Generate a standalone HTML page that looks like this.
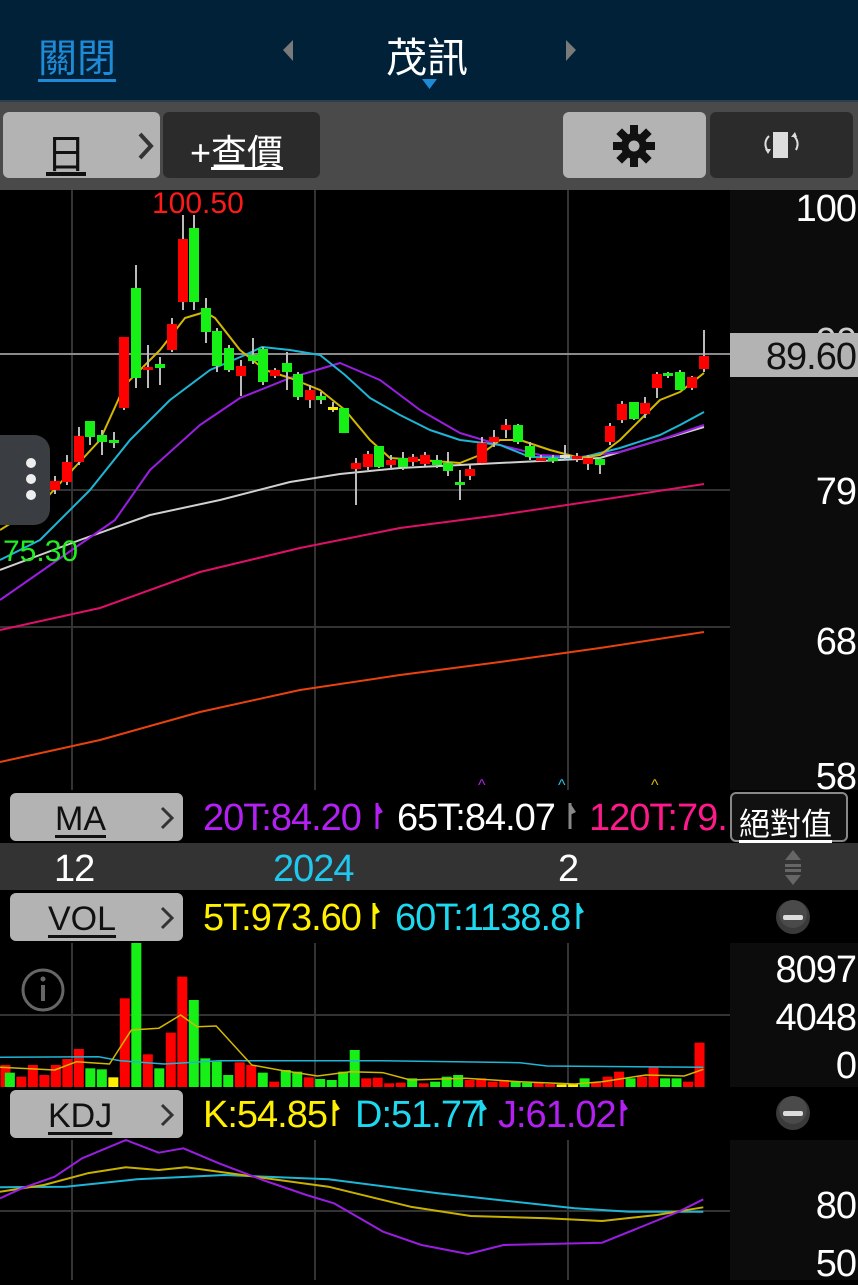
<!DOCTYPE html>
<html><head><meta charset="utf-8">
<style>
*{margin:0;padding:0;box-sizing:border-box}
body{width:858px;height:1280px;background:#000;overflow:hidden;position:relative;font-family:"Liberation Sans","Noto Sans CJK TC",sans-serif;color:#fff}
.abs{position:absolute}
.hdr{left:0;top:0;width:858px;height:100px;background:#012139}
.tb{left:0;top:100px;width:858px;height:90px;background:#4a4a4a;border-top:2px solid #2c3e4c}
.btn{position:absolute;border-radius:6px}
.lt{background:#b3b3b3}
.dk{background:#2b2b2b}
.lab{position:absolute;font-size:38px;white-space:nowrap;line-height:1;letter-spacing:-1px}
.ax{position:absolute;right:2px;font-size:38px;line-height:1;color:#fff;letter-spacing:-1px}
.gbtn{position:absolute;left:10px;width:173px;height:48px;background:#b3b3b3;border-radius:6px}
.gbtn span{position:absolute;left:45px;top:7px;font-size:34px;color:#111;text-decoration:underline;text-underline-offset:5px}
.gbtn svg{position:absolute;right:8px;top:13px}
</style></head><body>
<div class="abs hdr"></div>
<div class="abs" style="left:38px;top:28px;font-size:39px;color:#1f8bd6;text-decoration:underline;text-underline-offset:7px">關閉</div>
<div class="abs" style="left:386px;top:24px;font-size:41px;color:#fff">茂訊</div>
<svg class="abs" style="left:0;top:0" width="858" height="100">
<polygon points="293,40 293,61 283,50" fill="#7a7a7a"/>
<polygon points="566,40 566,61 576,50" fill="#7a7a7a"/>
<polygon points="422,79 437,79 429.5,89" fill="#1f8bd6"/>
</svg>
<div class="abs tb"></div>
<div class="btn lt" style="left:3px;top:112px;width:157px;height:66px"></div>
<div class="abs" style="left:46px;top:122px;font-size:40px;color:#111;text-decoration:underline;text-underline-offset:4px">日</div>
<svg class="abs" style="left:136px;top:131px" width="20" height="30"><polyline points="4,3 15,15 4,27" fill="none" stroke="#333" stroke-width="4"/></svg>
<div class="btn dk" style="left:163px;top:112px;width:157px;height:66px"></div>
<div class="abs" style="left:190px;top:124px;font-size:36px;color:#fff">+<span style="text-decoration:underline">查價</span></div>
<div class="btn lt" style="left:563px;top:112px;width:143px;height:66px"></div>
<svg class="abs" style="left:612px;top:124px" width="44" height="44" viewBox="-22 -22 44 44">
<g fill="#111"><circle r="13"/>
<g id="t"><rect x="-4" y="-21" width="8" height="10"/></g>
<use href="#t" transform="rotate(45)"/><use href="#t" transform="rotate(90)"/><use href="#t" transform="rotate(135)"/><use href="#t" transform="rotate(180)"/><use href="#t" transform="rotate(225)"/><use href="#t" transform="rotate(270)"/><use href="#t" transform="rotate(315)"/></g>
<circle r="5.5" fill="#b3b3b3"/></svg>
<div class="btn dk" style="left:710px;top:112px;width:143px;height:66px"></div>
<svg class="abs" style="left:760px;top:128px" width="44" height="34">
<rect x="13" y="4" width="15" height="26" fill="#ddd"/>
<path d="M9 8 Q3 14 7 22 M34 8 Q40 14 36 22" stroke="#ddd" stroke-width="2" fill="none"/>
<polygon points="5,21 11,21 8,26" fill="#ddd"/><polygon points="31,9 37,9 35,4" fill="#ddd"/>
</svg>

<svg id="main" class="abs" style="left:0;top:0" width="858" height="1280"></svg>

<div class="ax" style="top:190px">100</div>
<div class="ax" style="top:323px;color:#ccc">90</div>
<div class="abs" style="left:730px;top:333px;width:128px;height:44px;background:#b3b3b3"></div>
<div class="ax" style="top:338px;color:#111">89.60</div>
<div class="ax" style="top:473px">79</div>
<div class="ax" style="top:623px">68</div>
<div class="ax" style="top:758px">58</div>
<div class="abs" style="left:152px;top:187px;font-size:30px;color:#ff1a1a">100.50</div>
<div class="abs" style="left:3px;top:535px;font-size:30px;color:#22ee22">75.30</div>

<div class="abs" style="left:0;top:435px;width:50px;height:90px;background:#3a3e42;border-radius:0 16px 16px 0"></div>
<svg class="abs" style="left:20px;top:455px" width="24" height="50"><circle cx="11" cy="8" r="5" fill="#eee"/><circle cx="11" cy="24" r="5" fill="#eee"/><circle cx="11" cy="40" r="5" fill="#eee"/></svg>

<!-- MA row -->
<div class="gbtn" style="top:793px"><span style="left:45px">MA</span><svg width="16" height="24"><polyline points="3,2 13,12 3,22" fill="none" stroke="#333" stroke-width="3"/></svg></div>
<div class="lab" style="left:203px;top:799px;color:#b321f2">20T:84.20</div>
<div class="lab" style="left:397px;top:799px;color:#fff">65T:84.07</div>
<div class="lab" style="left:589px;top:799px;color:#ff1a8c;width:141px;overflow:hidden">120T:79.</div>
<div class="abs" style="left:730px;top:792px;width:118px;height:50px;border:2px solid #888;border-radius:6px;background:#111"></div>
<div class="abs" style="left:739px;top:799px;font-size:31px;text-decoration:underline;text-underline-offset:5px">絕對值</div>
<!-- date row -->
<div class="abs" style="left:0;top:843px;width:858px;height:47px;background:#333"></div>
<div class="lab" style="left:54px;top:850px">12</div>
<div class="lab" style="left:273px;top:850px;color:#1ec8ef">2024</div>
<div class="lab" style="left:558px;top:850px">2</div>
<svg class="abs" style="left:783px;top:850px" width="20" height="36"><polygon points="10,0 18,10 2,10" fill="#666"/><rect x="2" y="14" width="16" height="3" fill="#666"/><rect x="2" y="19" width="16" height="3" fill="#666"/><polygon points="10,35 18,25 2,25" fill="#666"/></svg>
<!-- VOL row -->
<div class="gbtn" style="top:893px"><span style="left:38px">VOL</span><svg width="16" height="24"><polyline points="3,2 13,12 3,22" fill="none" stroke="#333" stroke-width="3"/></svg></div>
<div class="lab" style="left:203px;top:899px;color:#ffef00">5T:973.60</div>
<div class="lab" style="left:395px;top:899px;color:#1ed8f0">60T:1138.8</div>
<div class="ax" style="top:951px">8097</div>
<div class="ax" style="top:999px">4048</div>
<div class="ax" style="top:1047px">0</div>
<!-- KDJ row -->
<div class="gbtn" style="top:1090px"><span style="left:38px">KDJ</span><svg width="16" height="24"><polyline points="3,2 13,12 3,22" fill="none" stroke="#333" stroke-width="3"/></svg></div>
<div class="lab" style="left:203px;top:1096px;color:#ffef00">K:54.85</div>
<div class="lab" style="left:355px;top:1096px;color:#1ed8f0">D:51.77</div>
<div class="lab" style="left:498px;top:1096px;color:#b321f2">J:61.02</div>
<div class="ax" style="top:1187px">80</div>
<div class="ax" style="top:1245px">50</div>

<script>
const S=document.getElementById('main');let h='';
const ln=(x1,y1,x2,y2,c,w)=>h+=`<line x1="${x1}" y1="${y1}" x2="${x2}" y2="${y2}" stroke="${c}" stroke-width="${w||1.5}"/>`;
const rc=(x,y,w,hh,c)=>h+=`<rect x="${x}" y="${y}" width="${w}" height="${hh}" fill="${c}"/>`;
const pl=(pts,c,w)=>h+=`<polyline points="${pts.map(p=>p.join(',')).join(' ')}" fill="none" stroke="${c}" stroke-width="${w||2}" stroke-linejoin="round"/>`;
rc(0,190,858,600,'#000');rc(730,190,128,600,'#0c0c0c');
rc(0,943,858,144,'#000');rc(730,943,128,144,'#0c0c0c');
rc(0,1140,858,140,'#000');rc(730,1140,128,140,'#0c0c0c');
for(const x of [72,315,568]){ln(x,190,x,790,'#333',2);ln(x,943,x,1087,'#333',2);ln(x,1140,x,1280,'#333',2);}
for(const y of [490,627]) ln(0,y,730,y,'#333',2);
ln(0,1015,730,1015,'#333',2);ln(0,1211,730,1211,'#333',2);
ln(0,354,730,354,'#8a8a8a',2);
pl([[0,762],[100,740],[200,712],[300,690],[400,675],[500,662],[600,648],[704,632]],'#e8420e');
pl([[0,630],[100,608],[200,572],[300,548],[400,528],[500,515],[600,500],[704,484]],'#e0106a');
pl([[0,570],[80,540],[150,515],[220,500],[290,482],[340,474],[400,468],[460,465],[560,460],[600,458],[660,440],[704,427]],'#d0d0d0');
pl([[0,600],[115,520],[150,470],[200,425],[240,398],[290,378],[340,363],[380,380],[420,410],[460,433],[500,445],[540,455],[580,457],[620,452],[660,440],[704,425]],'#9a1ee0');
pl([[0,560],[40,540],[90,490],[130,440],[170,400],[210,370],[245,355],[262,347],[290,350],[320,355],[345,375],[370,398],[400,415],[430,430],[460,440],[500,445],[530,457],[580,458],[620,448],[660,435],[680,425],[704,412]],'#1eb6d6');
pl([[0,530],[40,505],[100,440],[125,385],[160,350],[185,318],[205,312],[215,318],[240,350],[265,370],[290,378],[320,390],[345,410],[370,440],[390,458],[420,460],[460,463],[480,455],[500,440],[520,440],[550,450],[580,458],[600,455],[620,440],[640,420],[660,400],[680,392],[704,373]],'#d4b800');
const R='#ff0000',G='#17f017',Y='#ffee00';
const C=[[10,498,520,494,522,G],[21,504,507,500,512,R],[31,490,495,486,500,G],[43,489,495,486,498,R],[55,481,490,476,494,R],[67,462,482,455,485,R],[79,436,462,427,465,R],[90,421,437,421,445,G],[102,435,442,430,455,G],[114,440,443,432,448,G],[124,337,408,337,410,R],[136,288,378,265,388,G],[148,367,369,345,388,R],[160,364,368,357,385,G],[172,324,350,318,352,R],[183,239,302,215,310,R],[194,228,302,215,310,G],[206,308,332,298,343,G],[217,331,366,328,372,G],[229,348,370,345,372,G],[241,366,376,360,396,R],[253,355,361,338,364,G],[263,349,382,347,385,G],[275,370,376,368,378,R],[287,363,372,352,390,G],[298,374,397,372,400,G],[310,390,400,385,408,R],[321,396,400,392,404,G],[333,407,409,402,412,Y],[344,408,433,408,433,G],[356,463,469,458,505,R],[368,454,467,451,470,R],[379,446,467,446,468,G],[391,460,465,455,470,R],[403,458,467,452,470,G],[413,457,462,454,466,R],[425,455,464,452,466,R],[437,460,465,455,468,G],[448,463,471,452,476,G],[460,482,485,470,500,G],[470,469,476,465,480,R],[482,443,463,437,465,R],[494,437,442,430,447,R],[506,425,430,419,438,R],[518,425,442,424,444,G],[530,446,457,442,460,G],[541,458,460,455,462,R],[553,458,461,455,463,G],[565,455,457,445,460,'#ddd'],[577,456,459,453,462,R],[588,458,464,455,470,R],[600,459,465,457,474,G],[610,426,442,423,445,R],[622,404,420,401,423,R],[634,402,419,402,420,G],[645,403,414,397,418,R],[657,374,388,372,398,R],[668,373,375,372,378,G],[680,372,390,370,390,G],[692,377,388,376,390,R],[704,356,369,330,372,R]];
for(const [x,t,b,wt,wb,c] of C){ln(x,wt,x,wb,'#bbb',2);rc(x-5,t,10,Math.max(b-t,3),c);}
h+=`<text x="478" y="790" fill="#b321f2" font-size="16">^</text><text x="558" y="790" fill="#1ec8ef" font-size="16">^</text><text x="651" y="790" fill="#d4b800" font-size="16">^</text>`;
// little flag markers after values
const fl=(x,y,c)=>h+=`<line x1="${x}" y1="${y}" x2="${x}" y2="${y+26}" stroke="${c}" stroke-width="3"/><polygon points="${x},${y} ${x+6},${y+9} ${x},${y+12}" fill="${c}"/>`;
fl(377,803,'#b321f2');fl(570,803,'#888');fl(374,903,'#ffef00');fl(578,903,'#1ed8f0');fl(334,1100,'#ffef00');fl(481,1100,'#1ed8f0');fl(622,1100,'#b321f2');
const V=[[0,375,R],[8,398,G],[29,410,R],[50,375,R],[71,405,R],[92,375,R],[113,357,R],[134,327,R],[155,385,G],[176,388,G],[197,412,Y],[218,175,R],[239,0,G],[260,343,R],[281,385,G],[302,278,R],[323,110,R],[344,180,G],[365,355,G],[386,365,G],[407,405,G],[428,367,R],[449,375,R],[470,398,G],[491,425,R],[512,390,G],[533,395,G],[554,412,R],[575,417,G],[596,420,G],[617,395,G],[638,330,G],[659,415,R],[680,413,R],[701,430,R],[722,428,R],[743,415,G],[764,430,R],[785,425,G],[806,410,G],[827,405,G],[848,420,R],[869,415,R],[890,425,R],[911,420,R],[932,423,G],[953,428,G],[974,428,R],[995,432,R],[1016,433,Y],[1037,433,Y],[1058,415,G],[1079,428,R],[1100,410,R],[1121,395,R],[1142,415,G],[1163,410,R],[1184,380,R],[1205,415,G],[1226,415,G],[1247,425,R],[1268,308,R]];
const k=1/1.827;
for(const [zx,zy,c] of V){const x=zx*k,y=940+zy/3;const top=Math.max(y,943);rc(x+0.5,top,10,1087-top,c);}
const cv=(a)=>a.map(([zx,zy])=>[(zx*k).toFixed(1),(940+zy/3).toFixed(1)]);
pl(cv([[0,352],[180,350],[220,362],[300,372],[400,362],[700,362],[950,368],[1000,378],[1285,382]]),'#1eb6d6',1.5);
pl(cv([[0,382],[100,390],[140,365],[200,372],[240,270],[290,265],[330,225],[360,260],[395,258],[460,375],[510,390],[580,408],[640,395],[700,398],[750,420],[850,415],[950,425],[1050,432],[1100,425],[1180,405],[1250,408],[1285,388]]),'#d4b800',1.5);
pl(cv([[0,742],[120,740],[250,718],[410,705],[600,718],[800,760],[1050,805],[1150,815],[1285,815]]),'#1eb6d6',2);
pl(cv([[0,755],[80,735],[160,700],[230,682],[290,690],[340,682],[420,700],[600,740],[750,800],[860,828],[1000,835],[1100,843],[1200,825],[1285,802]]),'#c8b000',2);
pl(cv([[0,775],[40,745],[100,710],[150,655],[230,600],[290,638],[335,625],[400,670],[480,720],[560,765],[610,790],[700,875],[770,915],[855,942],[920,915],[1000,912],[1100,908],[1180,855],[1240,815],[1285,778]]),'#9a1ee0',2);
h+=`<circle cx="43" cy="990" r="20" fill="none" stroke="#666" stroke-width="3"/><circle cx="43" cy="979" r="2.5" fill="#666"/><rect x="41" y="985" width="4" height="16" fill="#666"/>`;
for(const cy of [917,1113]){h+=`<circle cx="793" cy="${cy}" r="17" fill="#3a3a3a"/><circle cx="793" cy="${cy-3}" r="14" fill="#555" opacity=".6"/><rect x="783" y="${cy-2}" width="20" height="5" rx="2" fill="#ddd"/>`;}
S.innerHTML=h;
</script>
</body></html>
